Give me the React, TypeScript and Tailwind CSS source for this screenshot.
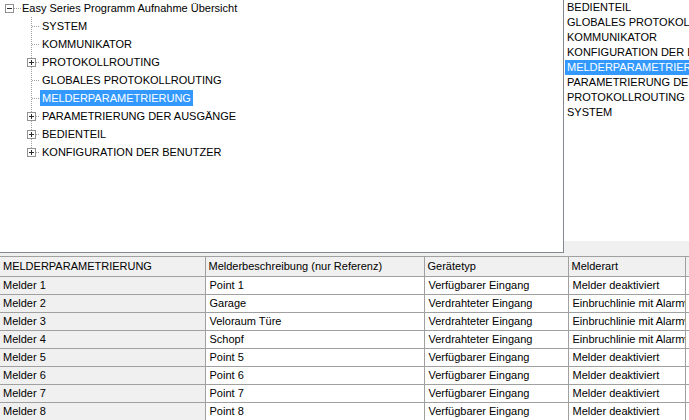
import { useState } from 'react';

interface TreeNode {
  label: string;
  expandable?: boolean;
}

const treeChildren: TreeNode[] = [
  { label: 'SYSTEM' },
  { label: 'KOMMUNIKATOR' },
  { label: 'PROTOKOLLROUTING', expandable: true },
  { label: 'GLOBALES PROTOKOLLROUTING' },
  { label: 'MELDERPARAMETRIERUNG' },
  { label: 'PARAMETRIERUNG DER AUSGÄNGE', expandable: true },
  { label: 'BEDIENTEIL', expandable: true },
  { label: 'KONFIGURATION DER BENUTZER', expandable: true },
];

const sortedList = [
  'BEDIENTEIL',
  'GLOBALES PROTOKOLLROUTING',
  'KOMMUNIKATOR',
  'KONFIGURATION DER BENUTZER',
  'MELDERPARAMETRIERUNG',
  'PARAMETRIERUNG DER AUSGÄNGE',
  'PROTOKOLLROUTING',
  'SYSTEM',
];

const rows = [
  ['Melder 1', 'Point 1', 'Verfügbarer Eingang', 'Melder deaktiviert'],
  ['Melder 2', 'Garage', 'Verdrahteter Eingang', 'Einbruchlinie mit Alarmverzögerung'],
  ['Melder 3', 'Veloraum Türe', 'Verdrahteter Eingang', 'Einbruchlinie mit Alarmverzögerung'],
  ['Melder 4', 'Schopf', 'Verdrahteter Eingang', 'Einbruchlinie mit Alarmverzögerung'],
  ['Melder 5', 'Point 5', 'Verfügbarer Eingang', 'Melder deaktiviert'],
  ['Melder 6', 'Point 6', 'Verfügbarer Eingang', 'Melder deaktiviert'],
  ['Melder 7', 'Point 7', 'Verfügbarer Eingang', 'Melder deaktiviert'],
  ['Melder 8', 'Point 8', 'Verfügbarer Eingang', 'Melder deaktiviert'],
];

// small +/- box like the classic windows tree
function ExpandBox({ x, y, open }: { x: number; y: number; open: boolean }) {
  return (
    <g>
      <rect x={x + 0.5} y={y + 0.5} width={8} height={8} fill="#fff" stroke="#919191" />
      <line x1={x + 2} y1={y + 4.5} x2={x + 7} y2={y + 4.5} stroke="#2b2b2b" />
      {!open && <line x1={x + 4.5} y1={y + 2} x2={x + 4.5} y2={y + 7} stroke="#2b2b2b" />}
    </g>
  );
}

function TreeConnector({ last, expandable }: { last: boolean; expandable?: boolean }) {
  return (
    <svg width="40" height="18" className="shrink-0 block">
      <line x1="31.5" y1="0" x2="31.5" y2={last ? 9 : 18} stroke="#a0a0a0" strokeDasharray="1 1" />
      <line x1="32" y1="9.5" x2="40" y2="9.5" stroke="#a0a0a0" strokeDasharray="1 1" />
      {expandable && <ExpandBox x={27} y={5} open={false} />}
    </svg>
  );
}

export default function App() {
  const [selected, setSelected] = useState('MELDERPARAMETRIERUNG');

  return (
    <div
      className="w-[689px] h-[420px] overflow-hidden bg-[#f0f0f0] text-[11px] text-black leading-none"
      style={{ fontFamily: '"Liberation Sans", Arial, sans-serif' }}
    >
      <div className="flex h-[253px]">
        {/* tree view */}
        <div className="w-[564px] bg-white border-r border-b border-[#828790]">
          <div className="flex items-center h-[17px]">
            <svg width="22" height="17" className="shrink-0 block">
              <ExpandBox x={5} y={4} open />
              <line x1="14" y1="8.5" x2="21" y2="8.5" stroke="#a0a0a0" strokeDasharray="1 1" />
            </svg>
            <span className="whitespace-nowrap">Easy Series Programm Aufnahme Übersicht</span>
          </div>
          {treeChildren.map((node, i) => (
            <div key={node.label} className="flex items-center h-[18px]">
              <TreeConnector last={i === treeChildren.length - 1} expandable={node.expandable} />
              <span
                onClick={() => setSelected(node.label)}
                className={
                  'whitespace-nowrap px-[2px] h-[16px] flex items-center ' +
                  (selected === node.label ? 'bg-[#3399ff] text-white' : '')
                }
              >
                {node.label}
              </span>
            </div>
          ))}
        </div>

        {/* sorted list */}
        <div className="flex-1 flex flex-col min-w-0">
          <div className="h-[241px] bg-white overflow-hidden">
            {sortedList.map((item) => (
              <div
                key={item}
                onClick={() => setSelected(item)}
                className={
                  'h-[15px] flex items-center pl-[2px] ml-[1px] whitespace-nowrap overflow-hidden ' +
                  (selected === item ? 'bg-[#3399ff] text-white' : '')
                }
              >
                {item}
              </div>
            ))}
          </div>
        </div>
      </div>

      {/* parameter grid */}
      <div className="mt-[3px] border-t border-[#a0a0a0] bg-white">
        <table className="border-collapse table-fixed w-[760px]">
          <colgroup>
            <col className="w-[205px]" />
            <col className="w-[219px]" />
            <col className="w-[144px]" />
            <col className="w-[117px]" />
            <col className="w-[75px]" />
          </colgroup>
          <thead>
            <tr className="h-[19px] bg-[#f0f0f0]">
              {['MELDERPARAMETRIERUNG', 'Melderbeschreibung (nur Referenz)', 'Gerätetyp', 'Melderart', ''].map((h, i) => (
                <th
                  key={i}
                  className="border-r border-b border-[#a0a0a0] text-left font-normal px-[3px] whitespace-nowrap overflow-hidden"
                >
                  {h}
                </th>
              ))}
            </tr>
          </thead>
          <tbody>
            {rows.map((r) => (
              <tr key={r[0]} className="h-[18px]">
                <td className="bg-[#f0f0f0] border-r border-b border-[#a0a0a0] px-[3px] whitespace-nowrap">{r[0]}</td>
                <td className="border-r border-b border-[#a0a0a0] px-[4px] whitespace-nowrap overflow-hidden">{r[1]}</td>
                <td className="border-r border-b border-[#a0a0a0] px-[4px] whitespace-nowrap overflow-hidden">{r[2]}</td>
                <td className="border-r border-b border-[#a0a0a0] px-[4px] whitespace-nowrap overflow-hidden">{r[3]}</td>
                <td className="border-r border-b border-[#a0a0a0] px-[4px]"></td>
              </tr>
            ))}
          </tbody>
        </table>
      </div>
    </div>
  );
}
